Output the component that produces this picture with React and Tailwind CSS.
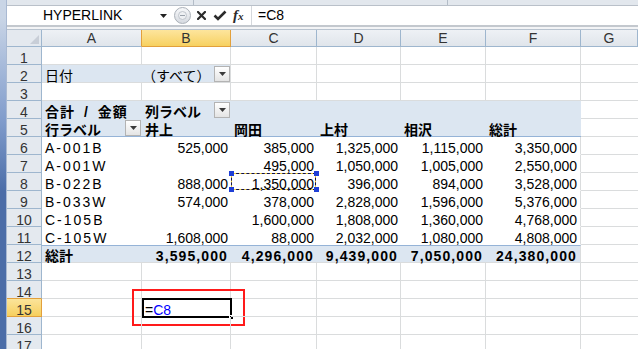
import React from 'react';

const FONT = "font-['Liberation_Sans','Noto_Sans_CJK_JP',sans-serif]";
const WIDTHS = ['w-[100px]', 'w-[89px]', 'w-[86px]', 'w-[84px]', 'w-[85px]', 'w-[95px]', 'flex-1 min-w-0'];
const LETTERS = ['A', 'B', 'C', 'D', 'E', 'F', 'G'];

const GRID = 'border-r border-b border-[#dadcdd]';
const GRID_G = 'border-b border-[#dadcdd]';
const NOLINE = 'border-b border-transparent';
const BLUE_PLAIN = 'bg-[#dce6f1] border-b border-transparent';
const BLUE_HEAD = 'bg-[#dce6f1] border-b border-[#95b3d7]';
const BLUE_TOTAL = 'bg-[#dce6f1] border-t border-b border-t-[#95b3d7] border-b-[#dadcdd]';

function Drop({ className = '' }) {
  return (
    <div className={`w-[16px] h-[16px] shrink-0 self-center border border-[#b3b3b3] bg-gradient-to-b from-[#ffffff] to-[#e4e4e4] flex items-center justify-center ${className}`}>
      <svg width="7" height="4" viewBox="0 0 7 4">
        <path d="M0 0H7L3.5 4Z" fill="#3a3a3a" />
      </svg>
    </div>
  );
}

function T({ children, bold, className = '' }) {
  return (
    <span className={`leading-[12px] whitespace-nowrap text-[14px] text-black ${bold ? 'font-bold' : ''} ${className}`}>
      {children}
    </span>
  );
}

function RowHead({ n, sel, beforeSel }) {
  const cls = sel
    ? 'bg-gradient-to-b from-[#fbe49a] to-[#f6cf5c] border-r border-b border-[#e2a03c]'
    : beforeSel
    ? 'bg-[#e4e9ef] border-r border-b border-r-[#9eb6ce] border-b-[#e2a03c]'
    : 'bg-[#e4e9ef] border-r border-b border-[#9eb6ce]';
  return (
    <div className={`w-[35px] shrink-0 h-full flex items-end justify-center ${cls}`}>
      <span className="leading-[12px] text-[14px] text-[#333]">{n}</span>
    </div>
  );
}

function Row({ n, cells }) {
  return (
    <div className="flex h-[18px] shrink-0">
      <RowHead n={n} sel={n === 15} beforeSel={n === 14} />
      {cells.map((c, i) => (
        <div
          key={i}
          className={`${WIDTHS[i]} shrink-0 h-full relative flex items-end ${c.between ? 'justify-between' : c.right ? 'justify-end' : 'justify-start'} ${c.pad || 'px-[3px]'} ${c.cls}`}
        >
          {c.content}
          {c.extra}
        </div>
      ))}
    </div>
  );
}

function normalRow() {
  return LETTERS.map((l, i) => ({ cls: i === 6 ? GRID_G : GRID }));
}

const DATA = [
  [6, 'A-001B', '525,000', '385,000', '1,325,000', '1,115,000', '3,350,000'],
  [7, 'A-001W', '', '495,000', '1,050,000', '1,005,000', '2,550,000'],
  [8, 'B-022B', '888,000', '1,350,000', '396,000', '894,000', '3,528,000'],
  [9, 'B-033W', '574,000', '378,000', '2,828,000', '1,596,000', '5,376,000'],
  [10, 'C-105B', '', '1,600,000', '1,808,000', '1,360,000', '4,768,000'],
  [11, 'C-105W', '1,608,000', '88,000', '2,032,000', '1,080,000', '4,808,000'],
];

const TOTAL = ['総計', '3,595,000', '4,296,000', '9,439,000', '7,050,000', '24,380,000'];

function MarchingAnts() {
  return (
    <>
      <div className="absolute left-0 top-0 right-[1px] bottom-0 border border-[#f5d23a]" />
      <div className="absolute left-0 top-0 right-[1px] bottom-0 border border-dashed border-[#101050]" />
      <div className="absolute left-[-2px] top-[-2px] w-[5px] h-[5px] bg-[#1f3fd6]" />
      <div className="absolute right-[-2px] top-[-2px] w-[5px] h-[5px] bg-[#1f3fd6]" />
      <div className="absolute left-[-2px] bottom-[-2px] w-[5px] h-[5px] bg-[#1f3fd6]" />
      <div className="absolute right-[-2px] bottom-[-2px] w-[5px] h-[5px] bg-[#1f3fd6]" />
    </>
  );
}

function ActiveCell() {
  return (
    <>
      <div className="absolute left-0 top-[-1px] w-[90px] h-[20px] border-2 border-black" />
      <div className="absolute left-[87px] top-[16px] w-[5px] h-[5px] bg-black border border-white" />
      <div className="absolute left-[-10px] top-[-10px] w-[113px] h-[37px] border-2 border-[#ff1a1a]" />
    </>
  );
}

function buildRows() {
  const rows = [];
  rows.push({ n: 1, cells: normalRow() });
  {
    const c = normalRow();
    c[0] = { cls: 'bg-[#dce6f1] border-b border-[#dadcdd]', content: <T>日付</T> };
    c[1] = {
      cls: 'bg-[#dce6f1] border-r border-b border-[#dadcdd]',
      between: true,
      pad: 'pl-0 pr-0',
      content: <T>（すべて）</T>,
      extra: <Drop />,
    };
    rows.push({ n: 2, cells: c });
  }
  rows.push({ n: 3, cells: normalRow() });
  {
    const c = normalRow();
    for (let i = 0; i < 6; i++) c[i] = { cls: BLUE_PLAIN };
    c[0] = { cls: BLUE_PLAIN, content: <T bold className="tracking-[1px] [word-spacing:4px]">合計 / 金額</T> };
    c[1] = { cls: BLUE_PLAIN, between: true, pad: 'pl-[3px] pr-[1px]', content: <T bold>列ラベル</T>, extra: <Drop /> };
    rows.push({ n: 4, cells: c });
  }
  {
    const c = normalRow();
    const names = [null, '井上', '岡田', '上村', '相沢', '総計'];
    for (let i = 0; i < 6; i++) c[i] = { cls: BLUE_HEAD, content: names[i] ? <T bold>{names[i]}</T> : null };
    c[0] = { cls: BLUE_HEAD, between: true, pad: 'pl-[3px] pr-[1px]', content: <T bold>行ラベル</T>, extra: <Drop /> };
    rows.push({ n: 5, cells: c });
  }
  DATA.forEach((r) => {
    const [n, ...vals] = r;
    const c = normalRow();
    for (let i = 0; i < 6; i++) {
      c[i] = {
        cls: i === 5 ? 'border-r border-b border-r-[#dadcdd] border-b-transparent' : NOLINE,
        right: i > 0,
        content: vals[i] ? <T className={i === 0 ? 'tracking-[2px]' : ''}>{vals[i]}</T> : null,
      };
    }
    if (n === 8) c[2].extra = <MarchingAnts />;
    rows.push({ n, cells: c });
  });
  {
    const c = normalRow();
    for (let i = 0; i < 6; i++) {
      c[i] = {
        cls: i === 5 ? `${BLUE_TOTAL} border-r border-r-[#dadcdd]` : BLUE_TOTAL,
        right: i > 0,
        content: <T bold className={i > 0 ? 'tracking-[1.1px]' : ''}>{TOTAL[i]}</T>,
      };
    }
    rows.push({ n: 12, cells: c });
  }
  rows.push({ n: 13, cells: normalRow() });
  rows.push({ n: 14, cells: normalRow() });
  {
    const c = normalRow();
    c[1] = {
      cls: GRID,
      content: (
        <T>
          =<span className="text-[#0000ff]">C8</span>
        </T>
      ),
      extra: <ActiveCell />,
    };
    rows.push({ n: 15, cells: c });
  }
  rows.push({ n: 16, cells: normalRow() });
  rows.push({ n: 17, cells: normalRow() });
  return rows;
}

export default function App() {
  const rows = buildRows();
  return (
    <div className={`w-[638px] h-[349px] overflow-hidden bg-white flex ${FONT}`}>
      <div className="w-[7px] shrink-0 h-full bg-gradient-to-b from-[#c9d5e6] from-5% via-[#7f9bcb] via-35% to-[#4b6da8] to-55% border-r border-[#a9b9d2]" />
      <div className="flex-1 min-w-0 flex flex-col">
        <div className="h-[6px] shrink-0 bg-[#e2e7ed] border-b border-[#b9c0c9] flex">
          <div className="w-[187px] border-r border-[#b3bcc7]" />
          <div className="w-[254px] border-r border-[#b3bcc7]" />
        </div>
        <div className="h-[21px] shrink-0 bg-white border-b-2 border-[#c3c8ce] flex items-center">
          <div className="w-[163px] shrink-0 flex items-center justify-between pl-[36px] pr-[3px]">
            <span className="text-[14px] text-black">HYPERLINK</span>
            <svg width="7" height="4" viewBox="0 0 7 4">
              <path d="M0 0H7L3.5 4Z" fill="#222" />
            </svg>
          </div>
          <div className="ml-[4px] w-[17px] h-[17px] shrink-0 rounded-full border border-[#aab0b8] bg-gradient-to-b from-[#f7f8fa] to-[#d6dae0] flex items-center justify-center">
            <div className="w-[9px] h-[9px] rounded-full border border-[#c1c6cd] bg-[#eef0f3] flex items-center justify-center">
              <div className="w-[5px] h-px bg-[#9aa2ac]" />
            </div>
          </div>
          <svg className="ml-[6px] shrink-0" width="9" height="9" viewBox="0 0 9 9">
            <path d="M1 1L8 8M8 1L1 8" stroke="#2b2b2b" strokeWidth="2.2" strokeLinecap="square" />
          </svg>
          <svg className="ml-[7px] shrink-0" width="14" height="11" viewBox="0 0 14 11">
            <path d="M1.5 5.5L5 9L12.5 1.5" stroke="#2b2b2b" strokeWidth="2.6" fill="none" />
          </svg>
          <span className="ml-[6px] w-[16px] shrink-0 font-['Liberation_Serif'] italic font-bold text-[15px] leading-[15px] text-[#2b2b2b]">
            f<span className="text-[11px]">x</span>
          </span>
          <div className="ml-[2px] w-px h-[19px] bg-[#d5d8dc] shrink-0" />
          <span className="ml-[6px] text-[14px] text-black">=C8</span>
        </div>
        <div className="h-[2px] shrink-0 bg-[#f3f4f6]" />
        <div className="flex h-[18px] shrink-0 border-t border-[#b8c3cf]">
          <div className="w-[35px] shrink-0 h-full bg-[#e4e9ef] border-r border-b border-[#9eb6ce] flex items-end justify-end p-[2px]">
            <svg width="9" height="9" viewBox="0 0 9 9">
              <path d="M9 0V9H0Z" fill="#c8ced7" />
            </svg>
          </div>
          {LETTERS.map((l, i) => (
            <div
              key={l}
              className={`${WIDTHS[i]} shrink-0 h-full flex items-center justify-center ${
                i === 1
                  ? 'bg-gradient-to-b from-[#fde59c] to-[#f7d15f] border-r border-b border-[#e2a03c]'
                  : i === 0
                  ? 'bg-gradient-to-b from-[#eef1f5] to-[#e0e5eb] border-r border-b border-r-[#e2a03c] border-b-[#9eb6ce]'
                  : 'bg-gradient-to-b from-[#eef1f5] to-[#e0e5eb] border-r border-b border-[#9eb6ce]'
              }`}
            >
              <span className="leading-[14px] text-[14px] text-[#333]">{l}</span>
            </div>
          ))}
        </div>
        {rows.map((r) => (
          <Row key={r.n} n={r.n} cells={r.cells} />
        ))}
      </div>
    </div>
  );
}
